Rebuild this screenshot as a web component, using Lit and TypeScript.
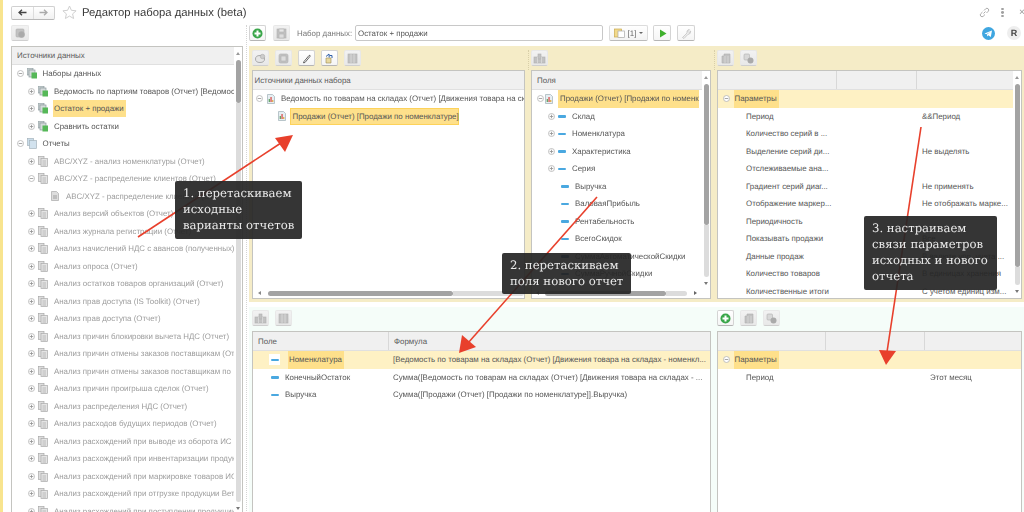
import { LitElement, html, css, svg } from "lit";
import { customElement } from "lit/decorators.js";

const tog = (k: "p" | "m" | "n") =>
  k === "n"
    ? html`<span class="tog"></span>`
    : html`<svg class="tog" viewBox="0 0 7 7"><circle cx="3.5" cy="3.5" r="3" fill="#fff" stroke="#b4b4b4" stroke-width=".8"/><path d="M1.7 3.5h3.6${k === "p" ? "M3.5 1.7v3.6" : ""}" stroke="#909090" stroke-width=".8"/></svg>`;

const setIcon = html`<svg class="ic" viewBox="0 0 10 11"><rect x="0" y="0" width="6" height="7" fill="#c4ccce" stroke="#8d9a9e" stroke-width=".7"/><rect x="2" y="2" width="6" height="7" fill="#d5dadb" stroke="#8d9a9e" stroke-width=".7"/><rect x="4.5" y="4.5" width="5.5" height="6" fill="#56b858"/></svg>`;
const groupIcon = html`<svg class="ic" viewBox="0 0 10 11"><rect x=".5" y=".5" width="6" height="7" fill="#c9dcea" stroke="#a5b4bd" stroke-width=".7"/><rect x="2.5" y="2.5" width="7" height="8" fill="#d2e2ee" stroke="#a5b4bd" stroke-width=".7"/></svg>`;
const reportIcon = html`<svg class="ic" viewBox="0 0 10 11"><rect x=".5" y=".5" width="5.5" height="8" fill="#ddd" stroke="#aaa" stroke-width=".7"/><rect x="3" y="2.5" width="6.5" height="8" fill="#e4e4e4" stroke="#aaa" stroke-width=".7"/><path d="M4.5 5h3.5M4.5 7h3.5M4.5 9h3.5" stroke="#aaa" stroke-width=".7"/></svg>`;
const pageGray = html`<svg class="ic small" viewBox="0 0 8 10"><path d="M.5.5h5l2 2v7h-7z" fill="#ddd" stroke="#aaa" stroke-width=".7"/><path d="M2 5h4M2 7h4" stroke="#999" stroke-width=".9"/></svg>`;
const pageColor = html`<svg class="ic small" viewBox="0 0 8 10"><path d="M.5.5h5l2 2v7h-7z" fill="#e6eef2" stroke="#9fb0b8" stroke-width=".7"/><rect x="1.7" y="5" width="1.2" height="3" fill="#5a9e5a"/><rect x="3.4" y="3" width="1.3" height="5" fill="#d9534f"/><rect x="5.2" y="6" width="1.1" height="2" fill="#e0a030"/></svg>`;
const dash = html`<span class="dash"></span>`;

const bGray = (inner: unknown) => svg`<g fill="#c2c2c2" stroke="#b0b0b0" stroke-width=".6">${inner}</g>`;
const icons: Record<string, unknown> = {
  plus: html`<svg viewBox="0 0 11 11"><circle cx="5.5" cy="5.5" r="5" fill="#3aa64a"/><path d="M5.5 2.5v6M2.5 5.5h6" stroke="#fff" stroke-width="2"/></svg>`,
  save: html`<svg viewBox="0 0 11 11">${bGray(svg`<rect x="1" y="1" width="9" height="9"/><rect x="3" y="1" width="5" height="3" fill="#e6e6e6"/><rect x="3" y="6" width="5" height="4" fill="#ddd"/>`)}</svg>`,
  gear: html`<svg viewBox="0 0 11 11">${bGray(svg`<rect x="1" y="1" width="8" height="8" rx="1"/><circle cx="6.5" cy="6.5" r="3" fill="#aaa"/>`)}</svg>`,
  refresh: html`<svg viewBox="0 0 11 11"><ellipse cx="5" cy="6" rx="4.5" ry="3.5" fill="#e6e6e6" stroke="#aaa"/><circle cx="7.5" cy="3.5" r="2.2" fill="#ccc" stroke="#aaa" stroke-width=".6"/></svg>`,
  box: html`<svg viewBox="0 0 11 11">${bGray(svg`<rect x="1" y="1" width="9" height="9" rx="1.5"/><rect x="3" y="3" width="5" height="5" fill="#ddd"/>`)}</svg>`,
  pencil: html`<svg viewBox="0 0 11 11"><path d="M3 8.5 8 2.5q1.2-.8 1.2.7L4 9.5 2.4 9.8z" fill="#fff" stroke="#555" stroke-width=".9"/></svg>`,
  home: html`<svg viewBox="0 0 11 11"><path d="M2 5v5h5V5z" fill="#e8d9a0" stroke="#9a8c50" stroke-width=".6"/><path d="M2 3.5 5 1M5 1l.2 3.5M8 5V2.5H5.5" stroke="#2e5fa8" fill="none" stroke-width="1"/></svg>`,
  table: html`<svg viewBox="0 0 11 11">${bGray(svg`<rect x="1" y="1" width="9" height="9"/><path d="M4 1v9M7 1v9" stroke="#e6e6e6"/>`)}</svg>`,
  field: html`<svg viewBox="0 0 13 11">${bGray(svg`<rect x="1" y="4" width="11" height="6"/><rect x="5" y="1" width="3" height="5"/><path d="M4.5 4v6M8.5 4v6" stroke="#e6e6e6"/>`)}</svg>`,
  doc: html`<svg viewBox="0 0 11 11">${bGray(svg`<path d="M2 3h2V1h6v9H2z"/><path d="M5 3v7M8 3v7" stroke="#e0e0e0"/>`)}</svg>`,
  link: html`<svg viewBox="0 0 11 11"><rect x="1" y="1" width="5.5" height="6" rx="1" fill="#d8d8d8" stroke="#b0b0b0" stroke-width=".6"/><circle cx="7.5" cy="7.5" r="3" fill="#aaa"/></svg>`,
  run: html`<svg viewBox="0 0 11 11"><path d="M3 1.5v8l6.5-4z" fill="#3fb02c"/></svg>`,
  wrench: html`<svg viewBox="0 0 11 11"><path d="M1.5 9.5 6 5q-.6-2.5 1.5-3.5l1 .2L7 3.5l1 1L9.7 3q.4 3-3 3.6L3 10.5z" fill="#eee" stroke="#bbb" stroke-width=".7"/></svg>`,
};
const btn = (name: string, on = false) =>
  html`<span class="btn ${on ? "on" : ""}">${icons[name]}</span>`;

type T = { lv: number; t: "p" | "m" | "n"; icon: unknown; text: string; cls?: string; hl?: boolean };
const gray = (text: string, t: "p" | "m" | "n" = "p", lv = 1, icon: unknown = reportIcon): T => ({ lv, t, icon, text, cls: "gray" });

const sources: T[] = [
  { lv: 0, t: "m", icon: setIcon, text: "Наборы данных" },
  { lv: 1, t: "p", icon: setIcon, text: "Ведомость по партиям товаров (Отчет) [Ведомос" },
  { lv: 1, t: "p", icon: setIcon, text: "Остаток + продажи", hl: true },
  { lv: 1, t: "p", icon: setIcon, text: "Сравнить остатки" },
  { lv: 0, t: "m", icon: groupIcon, text: "Отчеты" },
  gray("ABC/XYZ - анализ номенклатуры (Отчет)"),
  gray("ABC/XYZ - распределение клиентов (Отчет)", "m"),
  gray("ABC/XYZ - распределение клиентов (Отч", "n", 2, pageGray),
  gray("Анализ версий объектов (Отчет)"),
  gray("Анализ журнала регистрации (Отчет)"),
  gray("Анализ начислений НДС с авансов (полученных)"),
  gray("Анализ опроса (Отчет)"),
  gray("Анализ остатков товаров организаций (Отчет)"),
  gray("Анализ прав доступа (IS Toolkit) (Отчет)"),
  gray("Анализ прав доступа (Отчет)"),
  gray("Анализ причин блокировки вычета НДС (Отчет)"),
  gray("Анализ причин отмены заказов поставщикам (От"),
  gray("Анализ причин отмены заказов поставщикам по ,"),
  gray("Анализ причин проигрыша сделок (Отчет)"),
  gray("Анализ распределения НДС (Отчет)"),
  gray("Анализ расходов будущих периодов (Отчет)"),
  gray("Анализ расхождений при выводе из оборота ИС"),
  gray("Анализ расхождений при инвентаризации продук"),
  gray("Анализ расхождений при маркировке товаров ИС"),
  gray("Анализ расхождений при отгрузке продукции Вет"),
  gray("Анализ расхождений при поступлении продукции"),
];
const fields: [string, boolean][] = [
  ["Склад", true], ["Номенклатура", true], ["Характеристика", true], ["Серия", true],
  ["Выручка", false], ["ВаловаяПрибыль", false], ["Рентабельность", false], ["ВсегоСкидок", false],
  ["СуммаАвтоматическойСкидки", false], ["СуммаРучнойСкидки", false],
];
const params: [string, string][] = [
  ["Период", "&&Период"], ["Количество серий в ...", ""], ["Выделение серий ди...", "Не выделять"],
  ["Отслеживаемые ана...", ""], ["Градиент серий диаг...", "Не применять"],
  ["Отображение маркер...", "Не отображать марке..."], ["Периодичность", ""], ["Показывать продажи", "Все"],
  ["Данные продаж", "В валюте упр. учета ..."], ["Количество товаров", "В единицах хранения"],
  ["Количественные итоги", "С учетом единиц изм..."],
];

const vbar = (cls: string) => html`<div class="vbar ${cls}"><i class="up"></i><b class="thumb"></b><u class="track"></u><i class="down"></i></div>`;

@customElement("app-root")
export class AppRoot extends LitElement {
  static styles = css`
    :host { display: block; width: 1024px; height: 512px; overflow: hidden; position: relative; background: #fff;
      font: 7.9px "Liberation Sans", Arial, sans-serif; color: #555; text-rendering: geometricPrecision; }
    * { box-sizing: border-box; }
    .page { width: 1024px; height: 512px; border-left: 3px solid #f8e48e; display: grid; grid-template-rows: 25px 487px; filter: blur(.3px); }
    .top { display: flex; align-items: center; padding: 0 0 0 8px; }
    .nav { display: flex; width: 44px; height: 14px; border: 1px solid #d0d0d0; border-bottom-color: #b8b8b8; border-radius: 2px; background: linear-gradient(#fff, #f1f1f1); }
    .nav span { flex: 1; display: flex; align-items: center; justify-content: center; }
    .nav span + span { border-left: 1px solid #ddd; }
    .nav svg { width: 9px; height: 7px; }
    .star { width: 15px; height: 15px; margin-left: 7px; }
    .title { margin-left: 5px; font-size: 11.3px; color: #3a3a3a; }
    .winbtns { margin-left: auto; display: flex; align-items: center; }
    .winbtns svg { width: 11px; height: 11px; }
    .kebab { margin-left: 11px; margin-right: 15px; width: 3px; height: 9px; display: grid; gap: 1px; }
    .kebab i { background: #a0a0a0; border-radius: 50%; }
    .close { color: #999; font-size: 10px; width: 5px; overflow: hidden; }
    .body { display: grid; grid-template-columns: 232px 6px 775px; padding-left: 8px; height: 487px; overflow: hidden; }
    .left { display: grid; grid-template-rows: 16px 470px; row-gap: 5px; }
    .dotv { justify-self: center; border-left: 1px dotted #d4d4d4; height: 100%; }
    .btn { width: 17px; height: 16px; display: inline-flex; align-items: center; justify-content: center; flex: none;
      background: linear-gradient(#f2f2f2, #e8e8e8); border: 1px solid #e8e8e8; border-bottom-color: #cfcfcf; border-radius: 2px; }
    .btn.on { background: linear-gradient(#fff, #f5f5f5); border-color: #d4d4d4; border-bottom-color: #b5b5b5; }
    .btn svg { width: 11px; height: 11px; }
    .btn svg[viewBox="0 0 13 11"] { width: 13px; }
    .panel { display: flex; border: 1px solid #c4c4c0; background: #fff; overflow: hidden; min-width: 0; }
    .main { flex: 1; min-width: 0; display: flex; flex-direction: column; }
    .head { height: 19px; flex: none; background: #f0f0f0; border-bottom: 1px solid #e0e0e0; display: flex; align-items: center; padding-left: 5px; color: #5a5a5a; white-space: nowrap; }
    .head.tight { padding-left: 1.5px; }
    .left .head { height: 17.75px; }
    .rows { flex: 1; min-height: 0; overflow: hidden; }
    .row { height: 17.5px; display: flex; align-items: center; white-space: nowrap; overflow: hidden; }
    .tog { width: 7px; height: 7px; flex: none; }
    .ic { width: 10px; height: 11px; flex: none; margin-left: 3px; margin-right: 4.5px; }
    .ic.small { width: 8px; height: 10px; margin-left: 4px; margin-right: 6.5px; }
    .lb { height: 100%; display: flex; align-items: center; padding: 0 1px; flex: none; }
    .hl { background: #fee08b; padding: 0 2px 0 1px; }
    .gray { color: #9c9c9c; }
    .l0 { padding-left: 5px; }
    .l1 { padding-left: 16px; }
    .l1 .ic { margin-right: 5px; }
    .l2 { padding-left: 27.5px; }
    .vbar { width: 8px; flex: none; display: flex; flex-direction: column; align-items: center; padding: 5px 0; }
    .vbar .up, .vbar .down { width: 0; height: 0; border: 2px solid transparent; flex: none; }
    .vbar .up { border-top: 0; border-bottom: 3px solid #999; margin-bottom: 5px; }
    .vbar .down { border-bottom: 0; border-top: 3px solid #777; margin-top: 5px; }
    .vbar .thumb { width: 5px; background: #a3a3a3; border-radius: 2.5px; flex: none; }
    .vbar .track { width: 5px; flex: 1; background: #dcdcdc; border-radius: 0 0 2.5px 2.5px; }
    .tl .thumb { height: 43px; }
    .tf .thumb { height: 141px; }
    .tf { padding-bottom: 13px; }
    .tp .thumb { height: 183px; }
    .right { display: grid; grid-template-rows: 16px 261px 215px; }
    .bar { display: flex; align-items: center; }
    .bar .btn + .btn { margin-left: 6px; }
    .left .bar .btn { width: 18px; }
    .rtools { display: flex; align-items: center; }
    .rtools > .btn:nth-child(2) { margin-left: 7px; }
    .dsname { margin-left: 7px; width: 52px; flex: none; white-space: nowrap; color: #777; }
    .input { margin-left: 6px; width: 248px; height: 16px; border: 1px solid #c8c8c8; border-radius: 2px; display: flex; align-items: center; padding-left: 2px; background: #fff; }
    .variant { margin-left: 6px; width: 39px; height: 16px; display: flex; align-items: center; justify-content: center; gap: 3px; background: linear-gradient(#fff, #f3f3f3); border: 1px solid #dcdcdc; border-bottom-color: #bbb; border-radius: 2px; color: #666; }
    .variant svg { width: 11px; height: 10px; }
    .variant i { width: 0; height: 0; border: 2px solid transparent; border-bottom: 0; border-top: 2px solid #666; }
    .rtools .run { margin-left: 5px; width: 18px; }
    .rtools .wr { margin-left: 6px; width: 18px; }
    .tg { margin-left: auto; width: 13px; height: 13px; }
    .rr { margin-left: 12px; margin-right: 3px; width: 14px; height: 14px; border-radius: 50%; background: #eee; display: flex; align-items: center; justify-content: center; color: #444; font-weight: 700; font-size: 9px; }
    .yellow { margin-top: 5px; background: #f5ecc7; padding: 4px 2px 3px 3px; display: grid; grid-template-columns: 273px 6px 180px 6px 305px; height: 256px; }
    .mint { margin-top: 5px; background: #f5fdf9; padding: 3px 2px 0 3px; display: grid; grid-template-columns: 459px 6px 305px; height: 215px; }
    .pane { display: grid; grid-template-rows: 16px 1fr; row-gap: 4px; min-width: 0; min-height: 0; }
    .mint .pane { row-gap: 5px; }
    .sep { justify-self: center; border-left: 1px dotted #d8cfa8; height: 20px; }
    .mint .sep { border: 0; }
    .hbar { height: 10px; flex: none; display: flex; align-items: center; }
    .hbar i { width: 0; height: 0; border: 2px solid transparent; border-left: 0; border-right: 3px solid #888; flex: none; }
    .hbar i.rt { border-right: 0; border-left: 3px solid #666; }
    .hbar b { height: 5px; background: #a3a3a3; border-radius: 2.5px; flex: none; }
    .hbar u { height: 5px; flex: 1; background: #dcdcdc; border-radius: 0 2.5px 2.5px 0; }
    .h1 { padding-left: 5px; }
    .h1 i { margin-right: 7px; }
    .h1 b { width: 185px; }
    .h2 { padding-left: 4px; padding-right: 5px; }
    .h2 i { margin-right: 6px; }
    .h2 i.rt { margin: 0 0 0 7px; }
    .h2 b { width: 121px; }
    .src1 { padding-left: 3px; }
    .src1 .ic { margin-right: 6px; }
    .src2 { padding-left: 25px; }
    .src2 .ic { margin-left: 0; margin-right: 4px; }
    .pick { width: 169px; height: 17px; display: flex; align-items: center; padding: 0 1.5px; background: #fee08b; border: 1.5px solid #fdd25a; flex: none; }
    .f0 { padding-left: 5px; }
    .f0 .ic { margin-left: 1px; margin-right: 5px; }
    .f0 .lb { padding: 0 0 0 2px; }
    .f1 { padding-left: 16px; }
    .gapx { width: 2px; flex: none; }
    .dash { width: 8px; height: 2.5px; background: #4aa8e0; border-radius: 1px; flex: none; margin-left: 1px; margin-right: 6px; }
    .f1.flat { padding-left: 28px; }
    .dark .dash { background: #2a6a96; }
    .gridhead { height: 19px; flex: none; display: grid; background: #f0f0f0; border-bottom: 1px solid #e0e0e0; }
    .gridhead span { border-left: 1px solid #d8d8d8; display: flex; align-items: center; padding-left: 5px; color: #5a5a5a; }
    .gridhead span:first-child { border-left: 0; }
    .gp { grid-template-columns: 118px 80px 1fr; }
    .gb { grid-template-columns: 135px 1fr; }
    .gq { grid-template-columns: 107px 99px 1fr; }
    .band { background: #fef1c4; }
    .band .tog { margin-left: 4.5px; }
    .band .lb { margin-left: 4px; background: #fee08b; padding: 0 2px 0 1px; }
    .pr { display: grid; height: 17.5px; align-items: center; white-space: nowrap; overflow: hidden; }
    .pr > :first-child { padding-left: 28px; }
    .gp.pr { grid-template-columns: 198px 1fr; }
    .gp.pr > :last-child { padding-left: 6px; }
    .gq.pr { grid-template-columns: 206px 1fr; }
    .gq.pr > :last-child { padding-left: 6px; }
    .brow { display: grid; grid-template-columns: 135px 1fr; height: 17.5px; align-items: center; white-space: nowrap; overflow: hidden; }
    .brow .nm { display: flex; align-items: center; height: 100%; padding-left: 16px; }
    .brow .box { width: 11px; height: 11px; display: flex; align-items: center; justify-content: center; margin-right: 4px; flex: none; }
    .brow .box.white { background: #fff; }
    .brow .box .dash { margin: 0; }
    .brow .nm .lb { padding: 0 2px 0 1px; }
    .brow .nm .lb.hl { background: #fee08b; }
    .brow .fx { padding-left: 5px; }
    .arrows { position: absolute; inset: 0; width: 1024px; height: 512px; pointer-events: none; filter: blur(.3px); }
    .note { position: absolute; background: rgba(38, 38, 38, .93); border-radius: 2px; color: #ececec; font: 11.7px/16.3px "DejaVu Serif", serif; padding: 3.5px 8px; white-space: nowrap; filter: blur(.25px); }
    .n1 { left: 175px; top: 181px; width: 127px; height: 58px; }
    .n2 { left: 502px; top: 253px; width: 129px; height: 41px; }
    .n3 { left: 864px; top: 216px; width: 133px; height: 74px; }
  `;

  tree(r: T) {
    return html`<div class="row l${r.lv} ${r.cls ?? ""}">${tog(r.t)}${r.icon}<span class="lb ${r.hl ? "hl" : ""}">${r.text}</span></div>`;
  }

  render() {
    return html`
      <div class="page">
        <div class="top">
          <div class="nav">
            <span><svg viewBox="0 0 9 7"><path d="M8.5 3.5H1.5M4 .7 1 3.5 4 6.300" fill="none" stroke="#444" stroke-width="1.300"/></svg></span>
            <span><svg viewBox="0 0 9 7"><path d="M.5 3.500h7M5 .7l3 2.800-3 2.800" fill="none" stroke="#aaa" stroke-width="1.300"/></svg></span>
          </div>
          <svg class="star" viewBox="0 0 15 15"><path d="M7.500 1l1.900 4.300 4.700.5-3.500 3.100 1 4.600-4.100-2.400-4.100 2.400 1-4.600L.9 5.800l4.700-.5z" fill="#fff" stroke="#cfcfcf"/></svg>
          <div class="title">Редактор набора данных (beta)</div>
          <div class="winbtns">
            <svg viewBox="0 0 11 11"><path d="M4.500 6.500l2-2M3.500 5 1.800 6.700a1.700 1.700 0 0 0 2.500 2.500L6 7.500M5 3.500l1.700-1.700a1.700 1.700 0 0 1 2.500 2.500L7.500 6" fill="none" stroke="#aaa"/></svg>
            <span class="kebab"><i></i><i></i><i></i></span>
            <span class="close">×</span>
          </div>
        </div>
        <div class="body">
          <div class="left">
            <div class="bar">${btn("gear")}</div>
            <div class="panel">
              <div class="main">
                <div class="head">Источники данных</div>
                <div class="rows">${sources.map((r) => this.tree(r))}</div>
              </div>
              ${vbar("tl")}
            </div>
          </div>
          <div class="dotv"></div>
          <div class="right">
            <div class="rtools">
              ${btn("plus", true)}${btn("save")}
              <span class="dsname">Набор данных:</span>
              <div class="input">Остаток + продажи</div>
              <div class="variant">
                <svg viewBox="0 0 11 10"><rect x=".5" y="1" width="7" height="8" fill="#f2d98a" stroke="#c9a94e" stroke-width=".7"/><rect x="4" y="3" width="6.500" height="6.500" fill="#fff" stroke="#aaa" stroke-width=".7"/></svg>
                [1]<i></i>
              </div>
              <span class="btn on run">${icons.run}</span>
              <span class="btn on wr">${icons.wrench}</span>
              <svg class="tg" viewBox="0 0 13 13"><circle cx="6.500" cy="6.500" r="6.500" fill="#3fa6e0"/><path d="M2.500 6.500 10 3.500 8.800 10 6.300 8.200 5.200 9.500 5 7.500 8.500 4.800 4.300 7.200z" fill="#fff"/></svg>
              <span class="rr">R</span>
            </div>
            <div class="yellow">
              <div class="pane">
                <div class="bar">${btn("refresh")}${btn("box")}${btn("pencil", true)}${btn("home", true)}${btn("table")}</div>
                <div class="panel">
                  <div class="main">
                    <div class="head tight">Источники данных набора</div>
                    <div class="rows">
                      <div class="row src1">${tog("m")}${pageColor}<span>Ведомость по товарам на складах (Отчет) [Движения товара на ск</span></div>
                      <div class="row src2">${pageColor}<span class="pick">Продажи (Отчет) [Продажи по номенклатуре]</span></div>
                    </div>
                    <div class="hbar h1"><i></i><b></b><u></u></div>
                  </div>
                </div>
              </div>
              <div class="sep"></div>
              <div class="pane">
                <div class="bar">${btn("field")}</div>
                <div class="panel">
                  <div class="main">
                    <div class="head">Поля</div>
                    <div class="rows">
                      <div class="row f0">${tog("m")}${pageColor}<span class="lb hl">Продажи (Отчет) [Продажи по номенк</span></div>
                      ${fields.map(([f, t], i) => html`<div class="row f1 ${t ? "" : "flat"} ${i >= 8 ? "dark" : ""}">${t ? tog("p") : ""}${t ? html`<span class="gapx"></span>` : ""}${dash}<span>${f}</span></div>`)}
                    </div>
                    <div class="hbar h2"><i></i><b></b><u></u><i class="rt"></i></div>
                  </div>
                  ${vbar("tf")}
                </div>
              </div>
              <div class="sep"></div>
              <div class="pane">
                <div class="bar">${btn("doc")}${btn("link")}</div>
                <div class="panel">
                  <div class="main">
                    <div class="gridhead gp"><span></span><span></span><span></span></div>
                    <div class="rows">
                      <div class="row band">${tog("m")}<span class="lb">Параметры</span></div>
                      ${params.map(([a, b]) => html`<div class="pr gp"><span>${a}</span><span>${b}</span></div>`)}
                    </div>
                  </div>
                  ${vbar("tp")}
                </div>
              </div>
            </div>
            <div class="mint">
              <div class="pane">
                <div class="bar">${btn("field")}${btn("table")}</div>
                <div class="panel">
                  <div class="main">
                    <div class="gridhead gb"><span>Поле</span><span>Формула</span></div>
                    <div class="rows">
                      <div class="brow band"><div class="nm"><span class="box white">${dash}</span><span class="lb hl">Номенклатура</span></div><span class="fx">[Ведомость по товарам на складах (Отчет) [Движения товара на складах - номенкл...</span></div>
                      <div class="brow"><div class="nm"><span class="box">${dash}</span><span class="lb">КонечныйОстаток</span></div><span class="fx">Сумма([Ведомость по товарам на складах (Отчет) [Движения товара на складах - ...</span></div>
                      <div class="brow"><div class="nm"><span class="box">${dash}</span><span class="lb">Выручка</span></div><span class="fx">Сумма([Продажи (Отчет) [Продажи по номенклатуре]].Выручка)</span></div>
                    </div>
                  </div>
                </div>
              </div>
              <div class="sep"></div>
              <div class="pane">
                <div class="bar">${btn("plus", true)}${btn("doc")}${btn("link")}</div>
                <div class="panel">
                  <div class="main">
                    <div class="gridhead gq"><span></span><span></span><span></span></div>
                    <div class="rows">
                      <div class="row band">${tog("m")}<span class="lb">Параметры</span></div>
                      <div class="pr gq"><span>Период</span><span>Этот месяц</span></div>
                    </div>
                  </div>
                </div>
              </div>
            </div>
          </div>
        </div>
      </div>
      <svg class="arrows" viewBox="0 0 1024 512">
        <g stroke="#e8402c" stroke-width="1.600" fill="none">
          <path d="M138 237 284 141"/><path d="M597 197 468 343"/><path d="M921 127 887 352"/>
        </g>
        <g fill="#e8402c">
          <path d="M293 135 275 138 285 152z"/><path d="M459 353 462 335 476 347z"/><path d="M886 365 879 350 896 351z"/>
        </g>
      </svg>
      <div class="note n1">1. перетаскиваем<br />исходные<br />варианты отчетов</div>
      <div class="note n2">2. перетаскиваем<br />поля нового отчет</div>
      <div class="note n3">3. настраиваем<br />связи параметров<br />исходных и нового<br />отчета</div>
    `;
  }
}
